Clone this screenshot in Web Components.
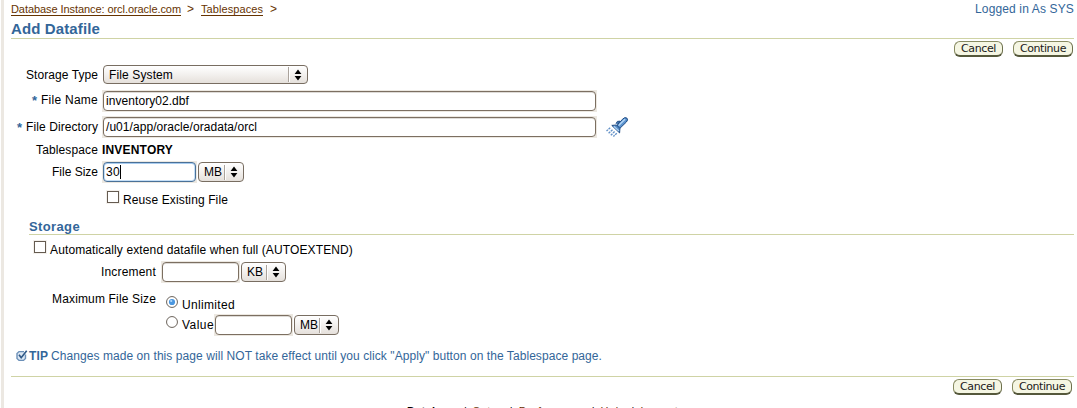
<!DOCTYPE html>
<html lang="en"><head><meta charset="utf-8"><title>Add Datafile</title>
<style>html,body{margin:0;height:408px;overflow:hidden;background:#fff}</style></head><body>
<datafile-page></datafile-page>
<script>
const define=(name,html,ready)=>customElements.define(name,class extends HTMLElement{
  connectedCallback(){
    if(this.shadowRoot)return;
    this.attachShadow({mode:'open'}).innerHTML=html;
    if(ready)ready.call(this,this.shadowRoot);
  }
});
// A single line of text whose tracking is adjusted to fill the width given in "w".
define('fit-text','<style>:host{display:block;flex:none;white-space:pre;line-height:16px}span{display:inline-block}</style><span><slot></slot></span>',function(r){
  const w=+this.getAttribute('w');
  if(!w)return;
  const s=r.querySelector('span');
  const n=this.textContent.length;
  s.style.letterSpacing=((w-s.getBoundingClientRect().width)/n)+'px';
  this.style.width=w+'px';
});
define('form-row','<style>:host{display:flex;align-items:center;box-sizing:border-box;flex:none}</style><slot></slot>',function(){this.style.height=this.getAttribute('h')+'px'});
define('field-label',`<style>:host{display:flex;flex:none;justify-content:flex-end;align-items:center;margin-right:5px}b{color:#369;font-size:13px;line-height:16px;font-weight:bold;margin-right:4px;position:relative;top:1px}</style><slot></slot>`,function(r){
  if(this.hasAttribute('required'))r.querySelector('slot').insertAdjacentHTML('beforebegin','<b>*</b>');
});
define('text-field',`<style>:host{display:block;flex:none;background:#ece8e1;height:22px;margin:0 -1px}
div{box-sizing:border-box;margin:1px;height:20px;border:1.5px solid #7c6f61;border-radius:4px;background:#fff;box-shadow:inset 0 1px #dedbd7;display:flex;align-items:center;padding:0 0 0 2px}
:host([focused]) div{border-color:#4a7198;box-shadow:inset 0 1px #a9ccef,inset 0 0 0 1px #c6dff6}
i{width:1px;height:14px;background:#000}</style><div><slot></slot></div>`,function(r){
  this.style.width=(+this.getAttribute('w')+2)+'px';
  if(this.hasAttribute('focused'))r.querySelector('div').insertAdjacentHTML('beforeend','<i></i>');
});
define('select-box',`<style>:host{display:flex;flex:none;box-sizing:border-box;height:20px;border:1px solid #786d61;border-radius:4px;background:linear-gradient(#fff,#f4f2f0 45%,#e5e0db);align-items:center;padding-left:5px}
i{margin-left:auto;width:1px;height:15px;background:#aaa39c;box-shadow:1px 0 #fff}svg{margin:0 5px 0 5px}</style>
<slot></slot><i></i><svg width="8" height="12"><path d="M4 .4 7.4 5H.6zM4 11.6.6 7h6.8z"/></svg>`,function(){this.style.width=this.getAttribute('w')+'px'});
define('check-box','<style>:host{display:block;flex:none;box-sizing:border-box;width:12px;height:12px;border:1px solid #655b50;background:#fff;box-shadow:0 0 0 1px #f3f0ec}</style>');
define('radio-button','<style>:host{display:block;flex:none;width:12px;height:12px}svg{display:block}circle+circle{display:none}:host([checked]) circle{display:inline}</style><svg width="12" height="12"><circle cx="6" cy="6" r="5.45" fill="#fff" stroke="#6b635b"/><circle cx="6" cy="6" r="3.1" fill="#4b97df"/><circle cx="5.2" cy="5" r="1.1" fill="#b4dbfa"/></svg>');
define('pill-button',`<style>:host{display:flex;flex:none;box-sizing:border-box;height:16px;border:1px solid #878a61;border-bottom:2px solid #55583b;border-right-color:#6d704d;border-radius:6px;background:#f5f6e3;justify-content:center;align-items:center;color:#1a1a1a;font:11px "DejaVu Sans",sans-serif}</style><slot></slot>`,function(){this.style.width=this.getAttribute('w')+'px'});
define('flashlight-icon',`<style>:host{display:block;flex:none}svg{display:block}</style><svg width="24" height="24" viewBox="0 0 24 24">
<path d="M11.8 11 17.4 4.3Q19.8 1.7 21.8 3q1.7 1.8-.4 4L14.6 13.6z" fill="#5b93cf" stroke="#1d4a83"/>
<path d="M13.5 10.5 20 4.2" stroke="#b3d6f6" stroke-width="1.6"/><path d="M11 8.6 12.4 6.4l2.6-.2-2.4 3.6" fill="#4779b2" stroke="#1d4a83"/>
<path d="M6.8 10.4 11.6 10l3.3 3.3-.3 4.6z" fill="#5387c0" stroke="#1d4a83"/><path d="M8.8 11.2l5.2 4.8" stroke="#a9d0f4" stroke-width="1.4"/>
<path d="M5.2 12.8 1.5 16M7.5 14.8l-4.5 4M9.6 16.6l-4 3.8M11.8 18.3l-3.4 3.2" stroke="#6592c8" stroke-width="1.4" stroke-dasharray="2.2 .8"/></svg>`);
define('tip-icon',`<style>:host{display:block;flex:none}svg{display:block}</style><svg width="12" height="12" viewBox="0 0 12 12" fill="none"><path d="M8 1.6H3L1 3.6v4.8l2 2h4.5l2-2V4.5" fill="#dce7f3" stroke="#6c90b8" stroke-width="1.4"/><path d="m3 4.7 2.2 3L10.7.8" stroke="#2f5887" stroke-width="1.7"/></svg>`);
define('datafile-page',`<style>
:host{display:flex;flex-direction:column;box-sizing:border-box;width:1077px;height:408px;overflow:hidden;font:12px "Liberation Sans",Arial,sans-serif;color:#000;padding:0 3px 0 7px;border-left:0;background:linear-gradient(90deg,#fff 1px,#ece8e2 1px,#ece8e2 4px,#fff 4px)}
.content{padding-left:4px;display:flex;flex-direction:column}
.end{margin-left:auto}.blue{color:#369}.brown{color:#630}.crumb{font-size:11px}
.u{border-bottom:1px solid #630;line-height:12px}
hr{border:0;height:1px;margin:0;background:#cfd3a5;width:100%;flex:none}
.n{width:87px}.m{width:145px}
.bar{color:#000;margin:0 6px}
</style><div class="content">
<form-row h="18" class="crumb brown"><fit-text w="170" class="u">Database Instance: orcl.oracle.com</fit-text><fit-text style="margin:0 7px 0 6px;font-size:12px">&gt;</fit-text><fit-text w="62" class="u">Tablespaces</fit-text><fit-text style="margin-left:7px;font-size:12px">&gt;</fit-text><fit-text w="99" class="end blue" style="font-size:12px">Logged in As SYS</fit-text></form-row>
<form-row h="20" class="blue" style="font-size:15px;font-weight:bold;padding-top:1px"><fit-text w="89">Add Datafile</fit-text></form-row><hr>
<form-row h="21" style="gap:10px;justify-content:flex-end;padding:0 1px 1px 0"><pill-button w="49"><fit-text w="35">Cancel</fit-text></pill-button><pill-button w="60"><fit-text w="46">Continue</fit-text></pill-button></form-row>
<form-row h="29"><field-label class="n"><fit-text w="72">Storage Type</fit-text></field-label><select-box w="205" style="height:19px"><fit-text w="64">File System</fit-text></select-box></form-row>
<form-row h="24"><field-label class="n" required style="padding-bottom:2px"><fit-text w="57">File Name</fit-text></field-label><text-field w="493"><fit-text w="83">inventory02.dbf</fit-text></text-field></form-row>
<form-row h="28"><field-label class="n" required><fit-text w="72">File Directory</fit-text></field-label><text-field w="493"><fit-text w="151">/u01/app/oracle/oradata/orcl</fit-text></text-field><flashlight-icon style="margin-left:9px"></flashlight-icon></form-row>
<form-row h="18"><field-label class="n" style="margin-right:4px"><fit-text w="62">Tablespace</fit-text></field-label><fit-text w="71" style="font-weight:bold">INVENTORY</fit-text></form-row>
<form-row h="26"><field-label class="n"><fit-text w="46">File Size</fit-text></field-label><text-field w="93" focused><fit-text w="14">30</fit-text></text-field><select-box w="46" style="margin-left:2px"><fit-text w="18">MB</fit-text></select-box></form-row>
<form-row h="24" style="padding-left:96px"><check-box></check-box><fit-text w="105" style="margin:6px 0 0 4px">Reuse Existing File</fit-text></form-row>
<form-row h="25" class="blue" style="font-size:13px;font-weight:bold;padding:11px 0 0 18px"><fit-text w="51">Storage</fit-text></form-row><hr style="margin-left:18px;width:auto">
<form-row h="24" style="padding-left:23px"><check-box></check-box><fit-text w="303" style="margin:6px 0 0 4px">Automatically extend datafile when full (AUTOEXTEND)</fit-text></form-row>
<form-row h="26"><field-label class="m" style="margin-right:6px"><fit-text w="55">Increment</fit-text></field-label><text-field w="77"></text-field><select-box w="45" style="margin-left:2px"><fit-text w="16">KB</fit-text></select-box></form-row>
<form-row h="27" style="padding-top:7px"><field-label class="m" style="margin-right:10px;padding-bottom:6px"><fit-text w="104">Maximum File Size</fit-text></field-label><radio-button checked></radio-button><fit-text w="53" style="margin:6px 0 0 4px">Unlimited</fit-text></form-row>
<form-row h="26" style="padding-left:155px"><radio-button style="margin-bottom:6px"></radio-button><fit-text w="32" style="margin-left:4px;margin-right:1px">Value</fit-text><text-field w="77"></text-field><select-box w="45" style="margin-left:2px"><fit-text w="18">MB</fit-text></select-box></form-row>
<form-row h="38" class="blue" style="padding:0 0 2px 5px"><tip-icon></tip-icon><fit-text w="19" style="font-weight:bold;margin:0 3px 0 1px">TIP</fit-text><fit-text w="551">Changes made on this page will NOT take effect until you click "Apply" button on the Tablespace page.</fit-text></form-row><hr>
<form-row h="20" style="gap:10px;justify-content:flex-end;padding:0 2px 0 0"><pill-button w="49"><fit-text w="35">Cancel</fit-text></pill-button><pill-button w="60"><fit-text w="46">Continue</fit-text></pill-button></form-row>
<form-row h="22" style="align-items:flex-start;padding:6px 0 0 396px;font-size:11px" class="brown"><fit-text w="51" style="color:#000;font-weight:bold">Database</fit-text><fit-text class="bar">|</fit-text><fit-text w="31">Setup</fit-text><fit-text class="bar">|</fit-text><fit-text w="67">Preferences</fit-text><fit-text class="bar">|</fit-text><fit-text w="25">Help</fit-text><fit-text class="bar">|</fit-text><fit-text w="38">Logout</fit-text></form-row>
</div>`);
</script></body></html>
